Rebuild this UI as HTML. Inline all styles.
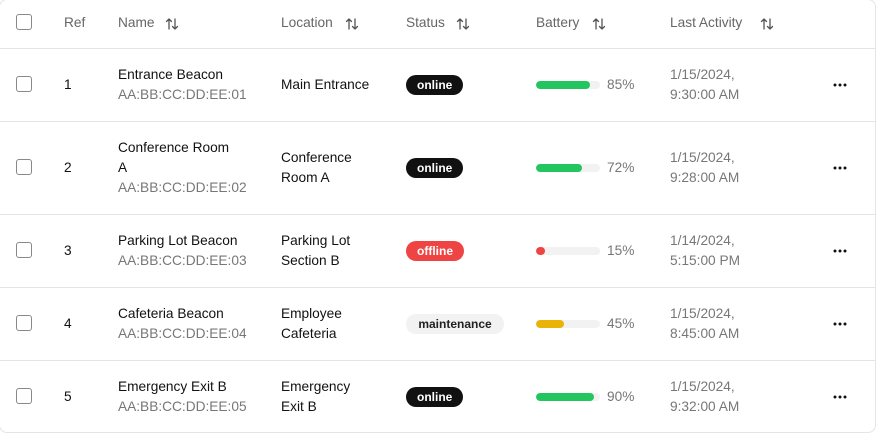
<!DOCTYPE html>
<html><head><meta charset="utf-8"><style>
*{box-sizing:border-box;margin:0;padding:0}
body{width:876px;height:433px;background:#fff;font-family:"Liberation Sans",sans-serif;font-size:13.7px;color:#111;position:relative;overflow:hidden}
.wrap{position:absolute;left:-1px;top:-1px;width:877px;height:434px;border:1px solid #e5e5e5;border-radius:8px}
.line{position:absolute;left:0;width:876px;height:1px;background:#e5e5e5}
.a{position:absolute;line-height:20px;white-space:nowrap}
.h{color:#666;top:13px}
.cb{position:absolute;left:16px;width:16px;height:16px;border:1px solid #888;border-radius:3px;background:#fff}
.g{color:#777}
.badge{position:absolute;left:406px;height:20px;line-height:20px;border-radius:10px;font-size:12px;font-weight:bold;padding:0 11px}
.on{background:#111;color:#fff;padding:0 11px}
.off{background:#ef4444;color:#fff}
.mn{background:#f2f2f2;color:#222;width:98px;text-align:center;padding:0}
.bar{position:absolute;left:536px;width:64px;height:8px;border-radius:4px;background:#f2f2f2;overflow:hidden}
.bar i{display:block;height:8px;border-radius:4px}
.dots{position:absolute;left:832px;width:16px;height:6px}
.arr{position:absolute;top:17px;width:14px;height:14px}
</style></head><body>
<div class="wrap"></div>
<svg width="0" height="0" style="position:absolute"><defs>
<symbol id="s" viewBox="0 0 14 14"><path d="M4 12V2M1.5 4.5L4 2l2.5 2.5M10 2v10M7.5 9.5L10 12l2.5-2.5" fill="none" stroke="#555" stroke-width="1.3" stroke-linecap="round" stroke-linejoin="round"/></symbol>
<symbol id="d" viewBox="0 0 16 6"><circle cx="3" cy="3" r="1.5" fill="#111"/><circle cx="8" cy="3" r="1.5" fill="#111"/><circle cx="13" cy="3" r="1.5" fill="#111"/></symbol>
</defs></svg>
<div class="cb" style="top:14px"></div>
<div class="a h" style="left:64px">Ref</div>
<div class="a h" style="left:118px">Name</div><svg class="arr" style="left:165px"><use href="#s"/></svg>
<div class="a h" style="left:281px">Location</div><svg class="arr" style="left:345px"><use href="#s"/></svg>
<div class="a h" style="left:406px">Status</div><svg class="arr" style="left:456px"><use href="#s"/></svg>
<div class="a h" style="left:536px">Battery</div><svg class="arr" style="left:592px"><use href="#s"/></svg>
<div class="a h" style="left:670px">Last Activity</div><svg class="arr" style="left:760px"><use href="#s"/></svg>
<div class="line" style="top:48px"></div>

<div class="cb" style="top:76px"></div>
<div class="a" style="left:64px;top:75px">1</div>
<div class="a" style="left:118px;top:65px">Entrance Beacon</div>
<div class="a g" style="left:118px;top:85px">AA:BB:CC:DD:EE:01</div>
<div class="a" style="left:281px;top:75px">Main Entrance</div>
<div class="badge on" style="top:75px">online</div>
<div class="bar" style="top:81px"><i style="width:54px;background:#22c55e"></i></div>
<div class="a g" style="left:607px;top:75px">85%</div>
<div class="a g" style="left:670px;top:65px">1/15/2024,</div>
<div class="a g" style="left:670px;top:85px">9:30:00 AM</div>
<svg class="dots" style="top:82px"><use href="#d"/></svg>
<div class="line" style="top:121px"></div>

<div class="cb" style="top:159px"></div>
<div class="a" style="left:64px;top:158px">2</div>
<div class="a" style="left:118px;top:138px">Conference Room</div>
<div class="a" style="left:118px;top:158px">A</div>
<div class="a g" style="left:118px;top:178px">AA:BB:CC:DD:EE:02</div>
<div class="a" style="left:281px;top:148px">Conference</div>
<div class="a" style="left:281px;top:168px">Room A</div>
<div class="badge on" style="top:158px">online</div>
<div class="bar" style="top:164px"><i style="width:46px;background:#22c55e"></i></div>
<div class="a g" style="left:607px;top:158px">72%</div>
<div class="a g" style="left:670px;top:148px">1/15/2024,</div>
<div class="a g" style="left:670px;top:168px">9:28:00 AM</div>
<svg class="dots" style="top:165px"><use href="#d"/></svg>
<div class="line" style="top:214px"></div>

<div class="cb" style="top:242px"></div>
<div class="a" style="left:64px;top:241px">3</div>
<div class="a" style="left:118px;top:231px">Parking Lot Beacon</div>
<div class="a g" style="left:118px;top:251px">AA:BB:CC:DD:EE:03</div>
<div class="a" style="left:281px;top:231px">Parking Lot</div>
<div class="a" style="left:281px;top:251px">Section B</div>
<div class="badge off" style="top:241px">offline</div>
<div class="bar" style="top:247px"><i style="width:9px;background:#ef4444"></i></div>
<div class="a g" style="left:607px;top:241px">15%</div>
<div class="a g" style="left:670px;top:231px">1/14/2024,</div>
<div class="a g" style="left:670px;top:251px">5:15:00 PM</div>
<svg class="dots" style="top:248px"><use href="#d"/></svg>
<div class="line" style="top:287px"></div>

<div class="cb" style="top:315px"></div>
<div class="a" style="left:64px;top:314px">4</div>
<div class="a" style="left:118px;top:304px">Cafeteria Beacon</div>
<div class="a g" style="left:118px;top:324px">AA:BB:CC:DD:EE:04</div>
<div class="a" style="left:281px;top:304px">Employee</div>
<div class="a" style="left:281px;top:324px">Cafeteria</div>
<div class="badge mn" style="top:314px">maintenance</div>
<div class="bar" style="top:320px"><i style="width:28px;background:#eab308"></i></div>
<div class="a g" style="left:607px;top:314px">45%</div>
<div class="a g" style="left:670px;top:304px">1/15/2024,</div>
<div class="a g" style="left:670px;top:324px">8:45:00 AM</div>
<svg class="dots" style="top:321px"><use href="#d"/></svg>
<div class="line" style="top:360px"></div>

<div class="cb" style="top:388px"></div>
<div class="a" style="left:64px;top:387px">5</div>
<div class="a" style="left:118px;top:377px">Emergency Exit B</div>
<div class="a g" style="left:118px;top:397px">AA:BB:CC:DD:EE:05</div>
<div class="a" style="left:281px;top:377px">Emergency</div>
<div class="a" style="left:281px;top:397px">Exit B</div>
<div class="badge on" style="top:387px">online</div>
<div class="bar" style="top:393px"><i style="width:58px;background:#22c55e"></i></div>
<div class="a g" style="left:607px;top:387px">90%</div>
<div class="a g" style="left:670px;top:377px">1/15/2024,</div>
<div class="a g" style="left:670px;top:397px">9:32:00 AM</div>
<svg class="dots" style="top:394px"><use href="#d"/></svg>
</body></html>
